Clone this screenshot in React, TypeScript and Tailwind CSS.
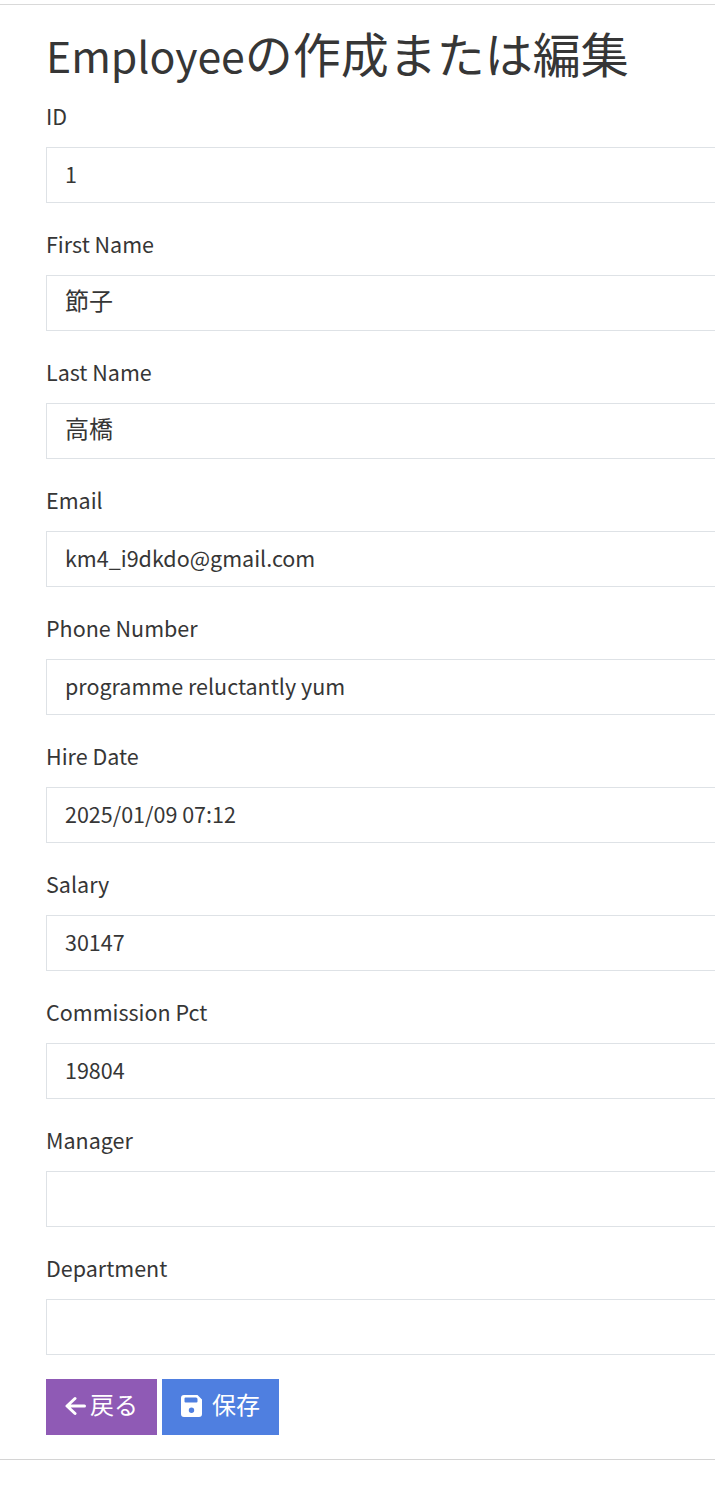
const fields: [string, string, boolean][] = [
  ["ID", "1", false],
  ["First Name", "節子", true],
  ["Last Name", "高橋", true],
  ["Email", "km4_i9dkdo@gmail.com", false],
  ["Phone Number", "programme reluctantly yum", false],
  ["Hire Date", "2025/01/09 07:12", false],
  ["Salary", "30147", false],
  ["Commission Pct", "19804", false],
  ["Manager", "", false],
  ["Department", "", false],
];

export default function App() {
  return (
    <div className="h-[1489px] w-[715px] overflow-hidden bg-white text-[#363636] [font-family:'Noto_Sans_CJK_JP','Noto_Sans',sans-serif]">
      <div className="pt-[4px]">
        <hr className="border-0 border-t border-[#d9d9d9]" />
      </div>
      <div className="w-[800px] pl-[46px]">
        <h1 className="h-[66px] pt-[14px] leading-[66px] font-normal">
          <span className="text-[42.8px]">Employee</span>
          <span className="text-[48px]">の作成または編集</span>
        </h1>
        <div className="flex flex-col gap-[24px] pt-[28px]">
          {fields.map(([label, value, cjk]) => (
            <div key={label} className="flex flex-col">
              <label className="mb-[8px] h-[40px] text-[21.5px] leading-[34px]">{label}</label>
              <div className={`flex h-[56px] items-center border border-[#dee2e6] pl-[18px] ${cjk ? "pb-[7px] text-[24px]" : "pb-[2px] text-[21.5px]"}`}>
                {value}
              </div>
            </div>
          ))}
        </div>
        <div className="mt-[24px] flex gap-[5px]">
          <button className="flex h-[56px] w-[111px] items-center justify-center bg-[#8f5ab5] pb-[2px] text-[24px] text-white">
            <svg width="21" height="20" viewBox="0 0 21 20" fill="none" stroke="currentColor" strokeWidth="3" strokeLinecap="round" strokeLinejoin="round">
              <path d="M19.5 10H2.5M10 2.5 2 10l8 7.5" />
            </svg>
            <span className="ml-[4px] pb-[4px]">戻る</span>
          </button>
          <button className="flex h-[56px] w-[117px] items-center justify-center gap-[10px] bg-[#4f7fe0] pb-[2px] text-[24px] text-white">
            <svg width="21" height="22" viewBox="0 0 21 22" fill="currentColor">
              <path
                fillRule="evenodd"
                d="M3 0h13.5L21 4.5V19a3 3 0 0 1-3 3H3a3 3 0 0 1-3-3V3a3 3 0 0 1 3-3ZM4.5 2.5a1 1 0 0 0-1 1v3a1 1 0 0 0 1 1h11a1 1 0 0 0 1-1V4a1.500 1.500 0 0 0-1.500-1.500ZM10.500 12.500a2.700 2.700 0 1 0 0 5.400 2.700 2.700 0 0 0 0-5.400Z"
              />
            </svg>
            <span className="pb-[4px]">保存</span>
          </button>
        </div>
      </div>
      <hr className="mt-[24px] border-0 border-t border-[#d4d4d4]" />
    </div>
  );
}
